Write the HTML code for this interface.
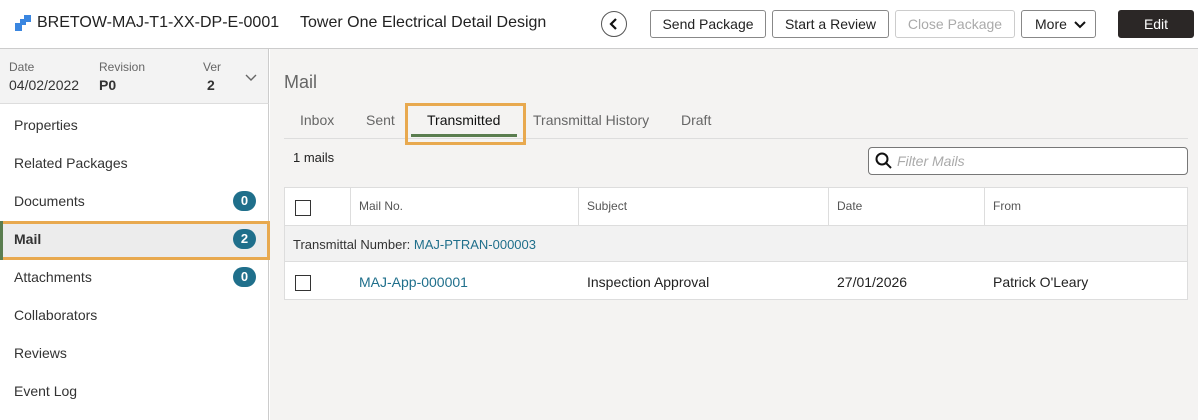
<!DOCTYPE html>
<html><head><style>
*{box-sizing:border-box;margin:0;padding:0}
body{width:1198px;height:420px;overflow:hidden;font-family:"Liberation Sans",sans-serif;background:#fff;color:#333;position:relative}
.a{position:absolute}
.btn{position:absolute;top:10px;height:28px;border:1px solid #888;border-radius:3px;background:#fff;font-size:14px;line-height:26px;text-align:center;color:#222}
.nav{position:absolute;left:14px;font-size:14px;color:#333}
.badge{position:absolute;left:233px;width:23px;height:20px;border-radius:10px;background:#1f6f8b;color:#fff;font-size:13px;font-weight:bold;text-align:center;line-height:20px}
.cb{position:absolute;width:16px;height:16px;border:1px solid #333;background:#fff}
.th{position:absolute;top:199px;font-size:12px;color:#555}
.vl{position:absolute;top:188px;width:1px;height:37px;background:#ddd}
</style></head><body>
<svg class="a" style="left:15px;top:15px" width="17" height="17"><rect x="0" y="8" width="7" height="8" fill="#3a86e0"/><rect x="5" y="4" width="6" height="6" fill="#3a86e0"/><rect x="9" y="0" width="7" height="7" fill="#3a86e0"/></svg>
<div class="a" style="left:37px;top:14px;font-size:16px;color:#222">BRETOW-MAJ-T1-XX-DP-E-0001</div>
<div class="a" style="left:300px;top:14px;font-size:16px;color:#222">Tower One Electrical Detail Design</div>
<div class="a" style="left:601px;top:11px;width:26px;height:26px;border:1px solid #555;border-radius:50%"></div>
<svg class="a" style="left:608px;top:17px" width="12" height="14"><path d="M8 2 L3 7 L8 12" stroke="#111" stroke-width="2.2" fill="none"/></svg>
<div class="btn" style="left:650px;width:116px">Send Package</div>
<div class="btn" style="left:772px;width:117px">Start a Review</div>
<div class="btn" style="left:895px;width:120px;color:#aaa;border-color:#ccc">Close Package</div>
<div class="btn" style="left:1021px;width:75px;text-align:left;padding-left:13px">More<svg style="position:absolute;left:52px;top:9px" width="12" height="9"><path d="M1 2 L6 7 L11 2" stroke="#111" stroke-width="2" fill="none"/></svg></div>
<div class="btn" style="left:1118px;width:76px;background:#2b2726;border-color:#2b2726;color:#fff">Edit</div>
<div class="a" style="left:0;top:48px;width:1198px;height:1px;background:#ccc"></div>
<div class="a" style="left:0;top:49px;width:269px;height:371px;background:#fff;border-right:1px solid #ccc"></div>
<div class="a" style="left:0;top:49px;width:269px;height:55px;background:#f3f3f3;border-bottom:1px solid #ddd;border-right:1px solid #ccc"></div>
<div class="a" style="left:9px;top:60px;font-size:12px;color:#666">Date</div>
<div class="a" style="left:9px;top:77px;font-size:14px">04/02/2022</div>
<div class="a" style="left:99px;top:60px;font-size:12px;color:#666">Revision</div>
<div class="a" style="left:99px;top:77px;font-size:14px;font-weight:bold">P0</div>
<div class="a" style="left:203px;top:60px;font-size:12px;color:#666">Ver</div>
<div class="a" style="left:207px;top:77px;font-size:14px;font-weight:bold">2</div>
<svg class="a" style="left:245px;top:74px" width="12" height="8"><path d="M1 1 L6 6 L11 1" stroke="#666" stroke-width="1.4" fill="none"/></svg>
<div class="nav" style="top:117px">Properties</div>
<div class="nav" style="top:155px">Related Packages</div>
<div class="nav" style="top:193px">Documents</div><div class="badge" style="top:191px">0</div>
<div class="a" style="left:0;top:221px;width:270px;height:39px;background:#ececec;border:3px solid #e8a94f"></div>
<div class="a" style="left:0;top:221px;width:3px;height:39px;background:#5a7d4f"></div>
<div class="nav" style="top:231px;font-weight:bold">Mail</div><div class="badge" style="top:229px">2</div>
<div class="nav" style="top:269px">Attachments</div><div class="badge" style="top:267px">0</div>
<div class="nav" style="top:307px">Collaborators</div>
<div class="nav" style="top:345px">Reviews</div>
<div class="nav" style="top:383px">Event Log</div>
<div class="a" style="left:270px;top:49px;width:928px;height:371px;background:#f4f3f2"></div>
<div class="a" style="left:284px;top:72px;font-size:18px;color:#666">Mail</div>
<div class="a" style="left:284px;top:138px;width:904px;height:1px;background:#ddd"></div>
<div class="a" style="left:300px;top:112px;font-size:14px;color:#666">Inbox</div>
<div class="a" style="left:366px;top:112px;font-size:14px;color:#666">Sent</div>
<div class="a" style="left:427px;top:112px;font-size:14px;color:#111">Transmitted</div>
<div class="a" style="left:411px;top:134px;width:106px;height:3px;background:#5a7d4f"></div>
<div class="a" style="left:405px;top:103px;width:121px;height:42px;border:3px solid #e8a94f"></div>
<div class="a" style="left:533px;top:112px;font-size:14px;color:#666">Transmittal History</div>
<div class="a" style="left:681px;top:112px;font-size:14px;color:#666">Draft</div>
<div class="a" style="left:293px;top:150px;font-size:13px;color:#222">1 mails</div>
<div class="a" style="left:868px;top:147px;width:320px;height:28px;border:1px solid #777;border-radius:4px;background:#fff"></div>
<svg class="a" style="left:875px;top:152px" width="18" height="18"><circle cx="7" cy="7" r="5.5" stroke="#111" stroke-width="2" fill="none"/><path d="M11 11 L16 16" stroke="#111" stroke-width="2"/></svg>
<div class="a" style="left:897px;top:153px;font-size:14px;font-style:italic;color:#aaa">Filter Mails</div>
<div class="a" style="left:284px;top:187px;width:904px;height:113px;background:#fff;border:1px solid #ddd"></div>
<div class="a" style="left:285px;top:225px;width:902px;height:37px;background:#f2f2f2;border-top:1px solid #ddd;border-bottom:1px solid #ddd"></div>
<div class="vl" style="left:350px"></div><div class="vl" style="left:578px"></div><div class="vl" style="left:828px"></div><div class="vl" style="left:984px"></div>
<div class="cb" style="left:295px;top:200px"></div>
<div class="th" style="left:359px">Mail No.</div>
<div class="th" style="left:587px">Subject</div>
<div class="th" style="left:837px">Date</div>
<div class="th" style="left:993px">From</div>
<div class="a" style="left:293px;top:237px;font-size:13px;color:#333">Transmittal Number: <span style="color:#1f6f8b">MAJ-PTRAN-000003</span></div>
<div class="cb" style="left:295px;top:275px"></div>
<div class="a" style="left:359px;top:274px;font-size:14px;color:#1f6f8b">MAJ-App-000001</div>
<div class="a" style="left:587px;top:274px;font-size:14px;color:#222">Inspection Approval</div>
<div class="a" style="left:837px;top:274px;font-size:14px;color:#222">27/01/2026</div>
<div class="a" style="left:993px;top:274px;font-size:14px;color:#222">Patrick O'Leary</div>
</body></html>
